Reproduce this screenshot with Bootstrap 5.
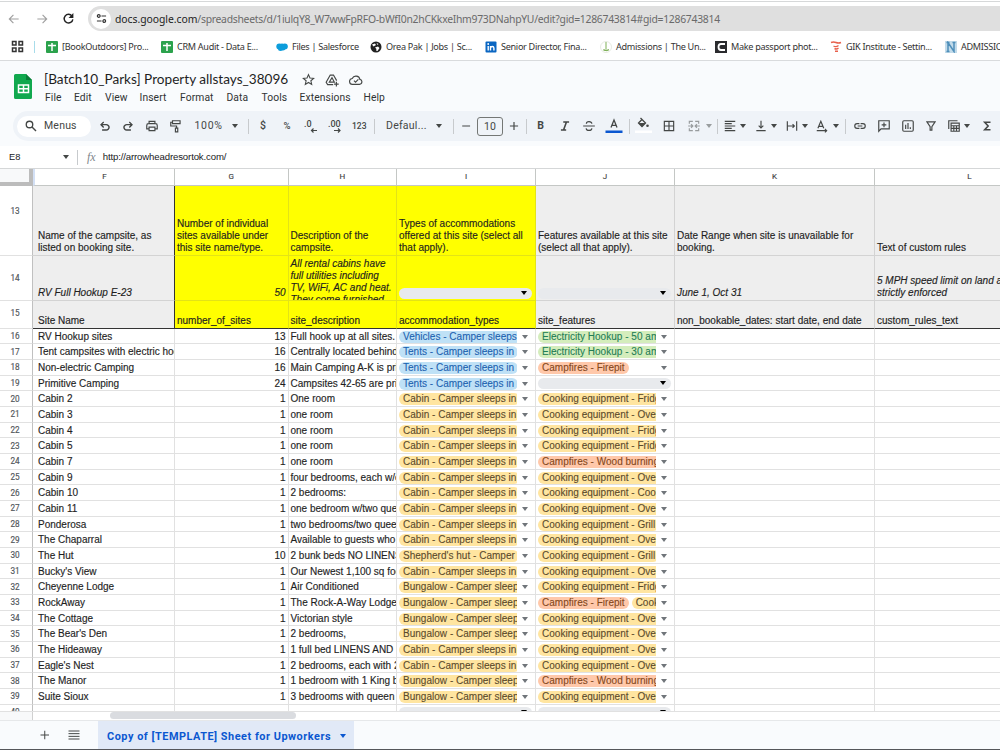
<!DOCTYPE html>
<html lang="en">
<head>
  <meta charset="UTF-8" />
  <meta name="viewport" content="width=device-width, initial-scale=1.0"/>
  <title>[Batch10_Parks] Property allstays_38096</title>
  <link href="https://cdn.jsdelivr.net/npm/bootstrap@5.3.0/dist/css/bootstrap.min.css" rel="stylesheet"/>

  <style>
    body {
      width: 1000px;
      height: 750px;
      overflow: hidden;
      background: #fff;
      color: #1f1f1f;
      font-family: "Liberation Sans", Arial, sans-serif;
      font-size: 10px;
      line-height: 12px;
    }

    svg { display: block; flex: none; }
    .ln { fill: none; stroke: #444746; stroke-width: 2; }
    .thick { stroke-width: 2.7; }
    .solid { fill: #444746; }

    /* browser bars */
    .top-edge { height: 2px; background: #fff; border-bottom: 1px solid #d6d8d9; }
    .address-row { height: 33px; padding: 4px 0 4px 7px; }
    .nav-icons { width: 81px; display: grid; grid-template-columns: 28px 27px 26px; align-items: center; }
    .url-pill { height: 25px; background: #dfdfdf; border-radius: 13px 0 0 13px; padding-left: 3px; }
    .site-chip { width: 20px; height: 20px; border-radius: 50%; background: #fff; }
    .url-text { margin-left: 4px; font-family: "Noto Sans", sans-serif; font-size: 10.4px; color: #6a6a6a; letter-spacing: -.28px; white-space: nowrap; }
    .url-text b { font-weight: 400; color: #222; letter-spacing: -.05px; }

    .bookmarks {
      height: 26px;
      padding: 0 0 2px 11px;
      display: grid;
      grid-template-columns: 23px 12px 115px 115px 94px 115px 115px 115px 115px 115px 70px;
      align-items: center;
      border-bottom: 1px solid #d9dbdd;
      font-family: "Noto Sans", sans-serif;
      font-size: 9.1px;
      letter-spacing: -.3px;
      color: #333;
      white-space: nowrap;
    }
    .bookmarks > div { display: flex; align-items: center; gap: 4px; }
    .bm-sep { width: 1px; height: 12px; background: #a8dcea; }

    /* document header */
    .doc-head { height: 49px; background: #f9fbfd; padding: 10px 0 0 13px; }
    .doc-info { margin-left: 11px; }
    .doc-title { font-family: Lato, sans-serif; font-size: 13.6px; line-height: 17px; color: #1f1f1f; }
    .doc-icons { margin-left: 14px; gap: 10px; }
    .doc-menu { font-family: Roboto, sans-serif; font-size: 10.3px; line-height: 16px; color: #303334; margin: 2px 0 0 1px;
      display: grid; grid-template-columns: 29px 31px 34.5px 40.5px 46.5px 35px 38px 64px 30px; letter-spacing: .1px; }

    .tool-wrap { height: 36px; background: #f9fbfd; padding: 1px 0 5px 13px; }
    .tools {
      height: 30px;
      padding-left: 4px;
      border-radius: 15px 0 0 15px;
      background: #eff3f8;
      display: grid;
      align-items: center;
      overflow: hidden;
      white-space: nowrap;
      font-family: Roboto, sans-serif;
      font-size: 10.5px;
      color: #444746;
      grid-template-columns: 80.5px 23.5px 24px 23.5px 26px 37px 16.5px 8px 24px 23px 25px 24px 22px 12px 49.5px 17.5px 6px 18px 30px 19px 7.5px 24px 24px 23px 24px 6.5px 27px 25px 19px 11px 6px 17px 14px 17px 14px 17px 13px 17.5px 12.5px 8px 24px 23.5px 23.5px 23px 17px 16px 20px;
    }
    .search-pill { width: 74px; height: 21px; border-radius: 11px; background: #fff; padding-left: 8px; gap: 7px; letter-spacing: .2px; }
    .caret { width: 0; height: 0; border: 3.5px solid transparent; border-top: 4px solid #444746; border-bottom: 0; }
    .bar { width: 1px; height: 15px; background: #c7cacd; }
    .glyph { width: 14px; text-align: center; font-weight: 500; }
    .glyph-pct { font-size: 9.5px; }
    .glyph-123 { font-size: 8.5px; font-weight: 500; }
    .zoom-value { letter-spacing: .7px; }
    .font-name { letter-spacing: .25px; }
    .size-box { width: 26px; height: 19px; border: 1px solid #747775; border-radius: 3px; text-align: center; line-height: 17px; }

    .formula { height: 22px; padding-left: 9px; color: #202124; }
    .name-box { width: 54px; font-size: 9.3px; }
    .formula-text { font-size: 9.6px; letter-spacing: -.13px; }
    .fx { font-family: "Liberation Serif", serif; font-style: italic; font-size: 12px; color: #80868b; margin: 0 7px 0 9px; }

    /* sheet */
    .sheet { height: 543px; overflow: hidden; border-top: 1px solid #d5d7d8; -webkit-text-stroke: .15px; }
    .sheet-row { display: grid; grid-template-columns: 33px 142px 113.5px 108.5px 139px 139px 200px 190px; width: 1065px; }
    .sheet-row > div { overflow: hidden; border-right: 1px solid #e1e1e1; border-bottom: 1px solid #e1e1e1; }
    .letters { height: 17px; font-family: Roboto, sans-serif; font-size: 8px; color: #444; text-align: center; }
    .letters > div { line-height: 16px; border-color: #c4c7c5; }
    .letters .corner { background: #f8f9fa; border-right: 4px solid #bcbcbc; border-bottom: 4px solid #bcbcbc; }
    .letters .corner + div { border-left: 2px solid #d3e0f5; }
    .sheet-row .row-no { font-family: Roboto, sans-serif; font-size: 8.2px; color: #50555a; display: flex; align-items: center; justify-content: center; padding-right: 2px; border-right-color: #c0c0c0; }
    .head-row .cell { background: #eee; border-color: #d3d3d3; padding: 0 2px 1px; display: flex; flex-direction: column; justify-content: flex-end; }
    .head-row .cell.yellow { background: #ff0; border-color: #e3e317; }
    .head-row .cell.edge { border-right-color: #333; }
    .head-row .cell.first { padding-left: 5px; }
    .r13 { height: 70px; }
    .r13 .row-no { padding-bottom: 20px; }
    .r14 { height: 45px; }
    .head-row .cell.from-top { justify-content: flex-start; padding-top: 2px; }
    .r15 { height: 27.5px; }
    .r15 .row-no { padding-bottom: 2px; }
    .r15 .cell, .r15 .cell.yellow { border-bottom-color: #333; }
    .data-row { height: 15.68px; }
    .data-row .cell { padding: 2px 2px 0; white-space: nowrap; }
    .data-row .cell.first { padding-left: 5px; }
    .pick { display: flex; align-items: center; height: 12px; width: 134px; }
    .chips { width: 118px; height: 12px; overflow: hidden; display: flex; gap: 3px; flex: none; margin-right: 5px; -webkit-text-stroke: .1px; }
    .chip { height: 12px; padding: 0 4px; border-radius: 6px; flex: none; letter-spacing: .02px; }
    .blank-pick { height: 11.5px; width: 133px; border-radius: 6px; background: #e8eaed; display: flex; align-items: center; justify-content: flex-end; padding-right: 5px; flex: none; }
    .blank-pick .caret { border-top-color: #000; }
    .pick .caret { border-top-color: #70757a; border-width: 4px 3px 0; }
    .c-blue { background: #bfe1f6; color: #1c62b0; }
    .c-green { background: #d4edbc; color: #237d55; }
    .c-orange { background: #ffc8aa; color: #84471a; }
    .c-yellow { background: #ffe5a0; color: #5b4a2b; }

    .scroll-row { height: 10px; border-top: 1px solid #e1e1e1; border-bottom: 1px solid #e6e8ea; }
    .scroll-row .pad { width: 33px; background: #f8f9fa; border-right: 1px solid #d0d0d0; }
    .thumb { width: 186px; height: 7px; margin-left: 77px; border-radius: 4px; background: #dadce0; }
    .tabs-row { height: 28px; background: #f9fbfd; padding-left: 39px; }
    .list-icon { margin-left: 17px; }
    .sheet-tab { height: 28px; margin-left: 18px; padding: 2px 8px 0 9px; width: 256px; background: #e1e9f7; color: #0b57d0; font: 700 10.9px Roboto, sans-serif; letter-spacing: .52px; white-space: nowrap; }
    .sheet-tab .caret { border-top-color: #0b57d0; }
    .screen-end { height: 2px; background: #55565a; }
  </style>
</head>

<body>
  <div class="top-edge"></div>

  <div class="address-row d-flex">
    <div class="nav-icons">
      <svg width="14" height="14" viewBox="0 0 24 24"><path d="M20 12H5M11 5l-7 7 7 7" fill="none" stroke="#a0a0a0" stroke-width="2"/></svg>
      <svg width="14" height="14" viewBox="0 0 24 24"><path d="M4 12h15M13 5l7 7-7 7" fill="none" stroke="#a0a0a0" stroke-width="2"/></svg>
      <svg width="13" height="13" viewBox="0 0 24 24"><path d="M18.5 7.5A8 8 0 1 0 20 13.5" fill="none" stroke="#222" stroke-width="2.6"/><path d="M21 2v9h-9z" fill="#222"/></svg>
    </div>
    <div class="url-pill d-flex align-items-center flex-grow-1">
      <div class="site-chip d-flex align-items-center justify-content-center">
        <svg width="11" height="11" viewBox="0 0 24 24" fill="none" stroke="#333" stroke-width="2.6"><circle cx="6" cy="6.5" r="3"/><path d="M12 6.5h10M2 17.5h10"/><circle cx="18" cy="17.5" r="3"/></svg>
      </div>
      <div class="url-text"><b>docs.google.com</b>/spreadsheets/d/1iulqY8_W7wwFpRFO-bWfI0n2hCKkxeIhm973DNahpYU/edit?gid=1286743814#gid=1286743814</div>
    </div>
  </div>

  <div class="bookmarks">
    <div><svg width="13" height="13" viewBox="0 0 13 13" fill="none" stroke="#333" stroke-width="1.5"><path d="M1.500 1.500h3.500v3.500H1.500zM8 1.500h3.500v3.500H8zM1.500 8h3.500v3.500H1.500zM8 8h3.500v3.500H8z"/></svg></div>
    <div><span class="bm-sep"></span></div>
    <div><svg width="12" height="12" viewBox="0 0 12 12"><rect width="12" height="12" rx="1" fill="#2ba24c"/><path d="M2 4.500h8M6 2v8" stroke="#fff" stroke-width="1.5"/></svg>[BookOutdoors] Pro...</div>
    <div><svg width="12" height="12" viewBox="0 0 12 12"><rect width="12" height="12" rx="1" fill="#2ba24c"/><path d="M2 4.500h8M6 2v8" stroke="#fff" stroke-width="1.5"/></svg>CRM Audit - Data E...</div>
    <div><svg width="12" height="12" viewBox="0 0 12 12" fill="#0d9ddb"><circle cx="3.300" cy="5.500" r="3"/><circle cx="6" cy="5" r="2.600"/><circle cx="8.800" cy="5.500" r="3"/><circle cx="4.500" cy="7.500" r="2.500"/><circle cx="7" cy="7.200" r="2.400"/></svg>Files | Salesforce</div>
    <div><svg width="12" height="12" viewBox="0 0 12 12"><circle cx="6" cy="6" r="5.500" fill="#222"/><path d="M2 3.500l3-1 1 1.500-2.500 1.500zM6.500 2l2 1-1 1M5 6.500l3-1 1.500 1.500-2 3-1.500-.5.500-1.500z" fill="#fff"/></svg>Orea Pak | Jobs | Sc...</div>
    <div><svg width="12" height="12" viewBox="0 0 12 12"><rect x=".5" y=".5" width="11" height="11" rx="1" fill="#0a66c2"/><path d="M3.200 5v4.500M5.500 9.500V5M5.500 7q.3-1.500 1.800-1.500T8.900 7v2.500" fill="none" stroke="#fff" stroke-width="1.4"/><circle cx="3.200" cy="3" r=".9" fill="#fff"/></svg>Senior Director, Fina...</div>
    <div><svg width="12" height="12" viewBox="0 0 12 12"><circle cx="6" cy="6" r="5.500" fill="#fff" stroke="#dfe6da" stroke-width=".8"/><path d="M6 1v7.500M3.500 8.500Q6 11 9 8.500M3.500 9.300h5" fill="none" stroke="#7eb057"/></svg>Admissions | The Un...</div>
    <div><svg width="12" height="12" viewBox="0 0 12 12"><rect width="12" height="12" fill="#2a2b2e"/><path d="M10 3H6Q3.500 3 3.500 6T6 9h4" fill="none" stroke="#fff" stroke-width="1.8"/></svg>Make passport phot...</div>
    <div><svg width="12" height="12" viewBox="0 0 12 12" fill="none" stroke="#e8604c" stroke-width="1.4"><path d="M1 1.500q2.500-1 5 0t5 0M3.500 5q2.500 1.500 5-.5M4.500 7.500q2 1 4-.3M5 10.300h3"/></svg>GIK Institute - Settin...</div>
    <div><svg width="12" height="12" viewBox="0 0 12 12"><rect width="12" height="12" fill="#c2dbea"/><path d="M3 10.500v-9l6 9v-9M1.500 1.500h3M1.500 10.500h3M7.500 1.500h3" fill="none" stroke="#4f8fba" stroke-width="1.5"/></svg>ADMISSIONS</div>
  </div>

  <div class="doc-head d-flex">
    <svg width="20" height="30" viewBox="0 0 20 30"><path d="M2 3h11l6 6v17.500a1.500 1.500 0 0 1-1.500 1.500H2.500A1.500 1.500 0 0 1 1 26.500V4.500A1.500 1.500 0 0 1 2.500 3z" fill="#11a84e"/><path d="M13 3l6 6h-6z" fill="#0b7d38"/><path d="M5.500 14h10v7.500h-10zM5.500 17.800h10M10.500 14v7.500" fill="none" stroke="#fff" stroke-width="1.5"/></svg>
    <div class="doc-info flex-grow-1">
      <div class="d-flex align-items-center">
        <div class="doc-title">[Batch10_Parks] Property allstays_38096</div>
        <div class="doc-icons d-flex align-items-center">
          <svg width="13" height="13" viewBox="0 0 24 24"><path class="ln" d="M12 3l2.700 6.200 6.800.6-5.100 4.500 1.500 6.700-5.900-3.600L6.100 21l1.500-6.700-5.100-4.500 6.800-.6z"/></svg>
          <svg width="14" height="14" viewBox="0 0 24 24" class="ln"><path d="M14 20H4.500L2 16 9 3.500h5.500L20 13M7.500 15.500L12 8l4 7.500zM19.500 15v8M15.500 19h8"/></svg>
          <svg width="14" height="14" viewBox="0 0 24 24" class="ln"><path d="M6.500 19.500a5 5 0 0 1-1-10 7 7 0 0 1 13.200 1.500 4.300 4.300 0 0 1-.7 8.500zM8.500 13l2.700 2.700 4.800-4.800"/></svg>
        </div>
      </div>
      <div class="doc-menu">
        <span>File</span><span>Edit</span><span>View</span><span>Insert</span><span>Format</span><span>Data</span><span>Tools</span><span>Extensions</span><span>Help</span>
      </div>
    </div>
  </div>

  <div class="tool-wrap">
    <div class="tools">
      <div class="search-pill d-flex align-items-center"><svg width="12" height="12" viewBox="0 0 24 24" class="ln"><circle cx="9" cy="9" r="6.500" class="thick"/><path d="M14 14l8 8" class="thick"/></svg>Menus</div>
      <svg width="14" height="14" viewBox="0 0 24 24"><path class="solid" d="M7 20v-2.500h7.100q1.400 0 2.500-.9t1.100-2.400-1.100-2.400-2.500-.9H7.800l2.800 2.800L9 15.300 3.500 9.700 9 4.200l1.600 1.600-2.800 2.700h6.300q2.500 0 4.300 1.600t1.800 4.100-1.800 4.200-4.300 1.600z"/></svg>
      <svg width="14" height="14" viewBox="0 0 24 24"><path class="solid" transform="matrix(-1 0 0 1 24 0)" d="M7 20v-2.500h7.100q1.400 0 2.500-.9t1.100-2.400-1.100-2.400-2.500-.9H7.800l2.800 2.800L9 15.300 3.500 9.700 9 4.200l1.600 1.600-2.800 2.700h6.300q2.500 0 4.300 1.600t1.800 4.100-1.800 4.200-4.300 1.600z"/></svg>
      <svg width="14" height="14" viewBox="0 0 24 24" class="ln"><path d="M7 8V4h10v4M7 17H3v-6q0-3 3-3h12q3 0 3 3v6h-4M7 14h10v6H7z"/></svg>
      <svg width="14" height="14" viewBox="0 0 24 24" class="ln"><path d="M6 3h13v5H6zM6 5.500H3V12h10v3M11 15.500h4V22h-4z"/></svg>
      <div class="zoom-value">100%</div>
      <div class="caret"></div>
      <div class="bar"></div>
      <div class="glyph">$</div>
      <div class="glyph glyph-pct">%</div>
      <svg width="15" height="16" viewBox="0 0 15 16"><text x="1" y="9" font-size="9" font-weight="500" fill="#444746">.0</text><path d="M14 12.500H8.500M10.500 10.500l-2 2 2 2" fill="none" stroke="#444746" stroke-width="1.2"/></svg>
      <svg width="16" height="16" viewBox="0 0 16 16"><text x="0" y="9" font-size="9" font-weight="500" fill="#444746">.00</text><path d="M6 12.500h6M10 10.500l2 2-2 2" fill="none" stroke="#444746" stroke-width="1.2"/></svg>
      <div class="glyph-123">123</div>
      <div class="bar"></div>
      <div class="font-name">Defaul...</div>
      <div class="caret"></div>
      <div class="bar"></div>
      <svg width="14" height="14" viewBox="0 0 24 24" class="ln"><path d="M5.500 12h13.500"/></svg>
      <div class="size-box">10</div>
      <svg width="14" height="14" viewBox="0 0 24 24" class="ln"><path d="M5 12h14M12 5v14"/></svg>
      <div class="bar"></div>
      <div class="glyph fw-bold">B</div>
      <svg width="14" height="14" viewBox="0 0 24 24" class="ln"><path d="M9 5h10M5 19h9M14.500 5l-5 14" class="thick"/></svg>
      <svg width="14" height="14" viewBox="0 0 24 24" class="ln"><path d="M2 12h20M17 8q-.5-3.500-5-3.500T7.500 8M7 16q.5 3.500 5 3.500t5-3.500"/></svg>
      <svg width="18" height="18" viewBox="0 0 18 18"><path d="M6 10.500L9 3l3 7.500M7 8.300h4" fill="none" stroke="#444746" stroke-width="1.3"/><path d="M.5 13.500h17V16H.5z" fill="#0b57d0"/></svg>
      <div class="bar"></div>
      <svg width="17" height="18" viewBox="0 0 17 18"><path d="M5.500 1l5 5L7 9.500 3.500 6 7 2.500" fill="none" stroke="#444746" stroke-width="1.3"/><path d="M3.500 6h7L7 9.700z" class="solid"/><circle cx="12.500" cy="8.700" r="1.300" class="solid"/><path d="M0 13.500h17V16H0z" fill="#fff"/></svg>
      <svg width="14" height="14" viewBox="0 0 24 24" class="ln"><path d="M4 4h16v16H4zM12 4v16M4 12h16"/></svg>
      <svg width="14" height="14" viewBox="0 0 24 24" class="ln opacity-50"><path d="M10 4H4v4M14 4h6v4M10 20H4v-4M14 20h6v-4M2 12h7M22 12h-7M7 9l3 3-3 3M17 9l-3 3 3 3"/></svg>
      <div class="caret opacity-50"></div>
      <div class="bar"></div>
      <svg width="14" height="14" viewBox="0 0 24 24" class="ln"><path d="M3 4h18M3 8h12M3 12h18M3 16h12M3 20h18"/></svg>
      <div class="caret"></div>
      <svg width="14" height="14" viewBox="0 0 24 24" class="ln"><path d="M4 20h16M12 3v12M8 11.500l4 4 4-4"/></svg>
      <div class="caret"></div>
      <svg width="14" height="14" viewBox="0 0 24 24" class="ln"><path d="M4 4v16M20 4v16M5 12h11M13 9l3 3-3 3"/></svg>
      <div class="caret"></div>
      <svg width="14" height="14" viewBox="0 0 24 24" class="ln"><path d="M5 16l5-12 5 12M7 12.500h6M3 20h17M17 17l3 3-3 3"/></svg>
      <div class="caret"></div>
      <div class="bar"></div>
      <svg width="14" height="14" viewBox="0 0 24 24" class="ln"><path d="M11 8H7a4 4 0 0 0 0 8h4M13 8h4a4 4 0 0 1 0 8h-4M8 12h8"/></svg>
      <svg width="14" height="14" viewBox="0 0 24 24" class="ln"><path d="M3 21V3h18v14H7zM12 6v8M8 10h8"/></svg>
      <svg width="14" height="14" viewBox="0 0 24 24" class="ln"><path d="M5 3h14q2 0 2 2v14q0 2-2 2H5q-2 0-2-2V5q0-2 2-2zM8 10v7M12 7v10M16 14v3"/></svg>
      <svg width="14" height="14" viewBox="0 0 24 24" class="ln"><path d="M5 5h14l-5.500 8v6h-3v-6z"/></svg>
      <svg width="14" height="14" viewBox="0 0 24 24" class="ln"><path d="M3 17V3h15M7 7h14v14H7zM7 11.500h14M7 16h14M11.700 11v10M16.300 11v10"/></svg>
      <div class="caret"></div>
      <svg width="14" height="14" viewBox="0 0 24 24" class="ln"><path d="M18 5.500H8l6 6.500-6 6.500h10" class="thick"/></svg>
    </div>
  </div>

  <div class="formula d-flex align-items-center">
    <div class="name-box">E8</div>
    <div class="caret"></div>
    <div class="bar ms-2"></div>
    <div class="fx">fx</div>
    <div class="formula-text">http://arrowheadresortok.com/</div>
  </div>

  <div class="sheet" id="sheet">
    <div class="sheet-row letters">
      <div class="corner"></div><div>F</div><div>G</div><div>H</div><div>I</div><div>J</div><div>K</div><div>L</div>
    </div>
    <div class="sheet-row head-row r13">
      <div class="row-no">13</div>
      <div class="cell first edge">Name of the campsite, as<br>listed on booking site.</div>
      <div class="cell yellow">Number of individual<br>sites available under<br>this site name/type.</div>
      <div class="cell yellow">Description of the<br>campsite.</div>
      <div class="cell yellow">Types of accommodations<br>offered at this site (select all<br>that apply).</div>
      <div class="cell">Features available at this site<br>(select all that apply).</div>
      <div class="cell">Date Range when site is unavailable for<br>booking.</div>
      <div class="cell">Text of custom rules</div>
    </div>
    <div class="sheet-row head-row r14 fst-italic">
      <div class="row-no fst-normal">14</div>
      <div class="cell first edge">RV Full Hookup E-23</div>
      <div class="cell yellow text-end">50</div>
      <div class="cell yellow from-top text-nowrap">All rental cabins have<br>full utilities including<br>TV, WiFi, AC and heat.<br>They come furnished</div>
      <div class="cell yellow"><div class="blank-pick"><div class="caret"></div></div></div>
      <div class="cell"><div class="blank-pick"><div class="caret"></div></div></div>
      <div class="cell">June 1, Oct 31</div>
      <div class="cell text-nowrap">5 MPH speed limit on land and<br>strictly enforced</div>
    </div>
    <div class="sheet-row head-row r15">
      <div class="row-no">15</div>
      <div class="cell first edge">Site Name</div>
      <div class="cell yellow">number_of_sites</div>
      <div class="cell yellow">site_description</div>
      <div class="cell yellow">accommodation_types</div>
      <div class="cell">site_features</div>
      <div class="cell">non_bookable_dates: start date, end date</div>
      <div class="cell">custom_rules_text</div>
    </div>
    <!-- data rows are filled by JS -->
  </div>

  <div class="scroll-row d-flex">
    <div class="pad"></div>
    <div class="thumb"></div>
  </div>
  <div class="tabs-row d-flex align-items-center">
    <svg width="12" height="12" viewBox="0 0 24 24" class="ln"><path d="M3 12h17M11.500 3.500v17"/></svg>
    <svg width="12" height="12" viewBox="0 0 24 24" class="ln list-icon"><path d="M1 4h22M1 9.300h22M1 14.700h22M1 20h22"/></svg>
    <div class="sheet-tab d-flex align-items-center justify-content-between">Copy of [TEMPLATE] Sheet for Upworkers<div class="caret"></div></div>
  </div>
  <div class="screen-end"></div>

  <script>
    const CABIN = "Cabin - Camper sleeps in", BUNG = "Bungalow - Camper sleeps";
    const TENT = "Tents - Camper sleeps in";
    const OVEN = "Cooking equipment - Oven", FRIDGE = "Cooking equipment - Fridge", GRILL = "Cooking equipment - Grill";

    // name, number of sites, description, accommodation chip, feature chips
    const rows = [
      ["RV Hookup sites", 13, "Full hook up at all sites.", "Vehicles - Camper sleeps", ["Electricity Hookup - 50 amp"]],
      ["Tent campsites with electric hookup", 16, "Centrally located behind", TENT, ["Electricity Hookup - 30 amp"]],
      ["Non-electric Camping", 16, "Main Camping A-K is primitive", TENT, ["Campfires - Firepit"]],
      ["Primitive Camping", 24, "Campsites 42-65 are primitive", TENT, []],
      ["Cabin 2", 1, "One room", CABIN, [FRIDGE]],
      ["Cabin 3", 1, "one room", CABIN, [OVEN]],
      ["Cabin 4", 1, "one room", CABIN, [FRIDGE]],
      ["Cabin 5", 1, "one room", CABIN, [FRIDGE]],
      ["Cabin 7", 1, "one room", CABIN, ["Campfires - Wood burning"]],
      ["Cabin 9", 1, "four bedrooms, each w/own", CABIN, [OVEN]],
      ["Cabin 10", 1, "2 bedrooms:", CABIN, ["Cooking equipment - Cool"]],
      ["Cabin 11", 1, "one bedroom w/two queen", CABIN, [OVEN]],
      ["Ponderosa", 1, "two bedrooms/two queen", CABIN, [GRILL]],
      ["The Chaparral", 1, "Available to guests who", CABIN, [OVEN]],
      ["The Hut", 10, "2 bunk beds NO LINENS", "Shepherd's hut - Camper", [GRILL]],
      ["Bucky's View", 1, "Our Newest 1,100 sq foot", CABIN, [OVEN]],
      ["Cheyenne Lodge", 1, "Air Conditioned", BUNG, [FRIDGE]],
      ["RockAway", 1, "The Rock-A-Way Lodge", BUNG, ["Campfires - Firepit", "Cooking"]],
      ["The Cottage", 1, "Victorian style", BUNG, [OVEN]],
      ["The Bear's Den", 1, "2 bedrooms,", BUNG, [OVEN]],
      ["The Hideaway", 1, "1 full bed LINENS AND", CABIN, [OVEN]],
      ["Eagle's Nest", 1, "2 bedrooms, each with 2", CABIN, [OVEN]],
      ["The Manor", 1, "1 bedroom with 1 King bed", BUNG, ["Campfires - Wood burning"]],
      ["Suite Sioux", 1, "3 bedrooms with queen", BUNG, [OVEN]],
      ["", "", "", "", []]
    ];

    function chipColor(text) {
      if (/^(Vehicles|Tents)/.test(text)) return "c-blue";
      if (text.startsWith("Electricity")) return "c-green";
      if (text.startsWith("Campfires")) return "c-orange";
      return "c-yellow";
    }

    function picker(list) {
      if (!list.length) return '<div class="blank-pick"><div class="caret"></div></div>';
      const chips = list.map(t => `<span class="chip ${chipColor(t)}">${t}</span>`).join("");
      return `<div class="pick"><div class="chips">${chips}</div><div class="caret"></div></div>`;
    }

    const sheet = document.getElementById("sheet");
    rows.forEach((r, i) => {
      const row = document.createElement("div");
      row.className = "sheet-row data-row";
      row.innerHTML = `<div class="row-no">${16 + i}</div>
        <div class="cell first">${r[0]}</div>
        <div class="cell text-end">${r[1]}</div>
        <div class="cell">${r[2]}</div>
        <div class="cell">${picker(r[3] ? [r[3]] : [])}</div>
        <div class="cell">${picker(r[4])}</div>
        <div class="cell"></div><div class="cell"></div>`;
      sheet.appendChild(row);
    });
  </script>

  <script src="https://cdn.jsdelivr.net/npm/bootstrap@5.3.0/dist/js/bootstrap.bundle.min.js"></script>
</body>
</html>
